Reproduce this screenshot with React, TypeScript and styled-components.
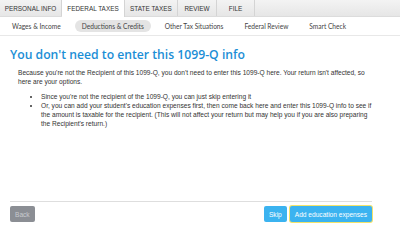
import { FC } from "react";
import styled, { createGlobalStyle } from "styled-components";

const GlobalStyle = createGlobalStyle`
  html, body {
    margin: 0;
    padding: 0;
    background: #fff;
  }
  body {
    width: 400px;
    height: 228px;
    overflow: hidden;
  }
`;

const topTabs = [
  { label: "PERSONAL INFO", width: 62 },
  { label: "FEDERAL TAXES", width: 63, active: true },
  { label: "STATE TAXES", width: 53 },
  { label: "REVIEW", width: 39 },
  { label: "FILE", width: 38 },
];

const subTabs = [
  { label: "Wages & Income" },
  { label: "Deductions & Credits", active: true },
  { label: "Other Tax Situations" },
  { label: "Federal Review" },
  { label: "Smart Check" },
];

const App: FC = () => (
  <Page>
    <GlobalStyle />
    <TopBar>
      {topTabs.map((t) => (
        <TopTab key={t.label} $active={t.active} style={{ width: t.width }}>
          {t.label}
        </TopTab>
      ))}
    </TopBar>

    <SubBar>
      {subTabs.map((t) => (
        <SubTab key={t.label} $active={t.active}>
          {t.label}
        </SubTab>
      ))}
    </SubBar>

    <Content>
      <Title>You don't need to enter this 1099-Q info</Title>
      <Body>
        <Para>
          Because you're not the Recipient of this 1099-Q, you don't need to enter this 1099-Q
          here. Your return isn't affected, so here are your options.
        </Para>
        <List>
          <li>Since you're not the recipient of the 1099-Q, you can just skip entering it</li>
          <li>
            Or, you can add your student's education expenses first, then come back here and
            enter this 1099-Q info to see if the amount is taxable for the recipient. (This will
            not affect your return but may help you if you are also preparing the Recipient's
            return.)
          </li>
        </List>
      </Body>
    </Content>

    <Footer>
      <GrayButton>Back</GrayButton>
      <Actions>
        <BlueButton>Skip</BlueButton>
        <BlueButton $focused>Add education expenses</BlueButton>
      </Actions>
    </Footer>
  </Page>
);

export default App;

const Page = styled.div`
  width: 400px;
  height: 228px;
  display: flex;
  flex-direction: column;
  font-family: "Liberation Sans", Arial, sans-serif;
`;

const TopBar = styled.div`
  display: flex;
  height: 17px;
  background: linear-gradient(#f3f3f3, #e6e6e6);
  border-bottom: 1px solid #dcdcdc;
  box-sizing: border-box;
`;

const TopTab = styled.div<{ $active?: boolean }>`
  display: flex;
  align-items: center;
  justify-content: center;
  box-sizing: border-box;
  height: ${(p) => (p.$active ? "17px" : "16px")};
  font-size: 6.4px;
  color: #333;
  background: ${(p) => (p.$active ? "#fff" : "transparent")};
  border-right: 1px solid #d4d4d4;
  white-space: nowrap;
`;

const SubBar = styled.div`
  display: flex;
  align-items: center;
  height: 18px;
  padding-left: 5px;
  gap: 7px;
  border-bottom: 1px solid #e8e8e8;
`;

const SubTab = styled.div<{ $active?: boolean }>`
  font-family: Lato, "Noto Sans", sans-serif;
  font-size: 6.6px;
  color: #444;
  padding: 2px 7px;
  border-radius: 8px;
  background: ${(p) => (p.$active ? "#e4e4e4" : "transparent")};
  white-space: nowrap;
`;

const Content = styled.div`
  flex: 1;
  padding: 11px 10px 0 10px;
`;

const Title = styled.h1`
  margin: 0;
  font-family: "Open Sans", "Noto Sans", sans-serif;
  font-weight: 600;
  font-size: 12.2px;
  line-height: 16px;
  color: #1b8ed6;
`;

const Body = styled.div`
  padding: 6px 0 0 8px;
  font-size: 6.6px;
  line-height: 8.7px;
  color: #333;
  width: 356px;
`;

const Para = styled.p`
  margin: 0;
`;

const List = styled.ul`
  margin: 7px 0 0 0;
  padding-left: 23px;
  list-style: disc;
`;

const Footer = styled.div`
  margin: 0 28px 6px 10px;
  border-top: 1px solid #dedede;
  padding-top: 4px;
  display: flex;
  align-items: center;
  justify-content: space-between;
`;

const Actions = styled.div`
  display: flex;
  gap: 3px;
`;

const Button = styled.button`
  font-family: "Liberation Sans", Arial, sans-serif;
  font-size: 6.6px;
  height: 16px;
  padding: 0 5px;
  border: none;
  border-radius: 2px;
  color: #fff;
  cursor: pointer;
`;

const GrayButton = styled(Button)`
  background: #8b8e94;
  color: #c9cbcf;
`;

const BlueButton = styled(Button)<{ $focused?: boolean }>`
  background: #3bb3f0;
  box-shadow: ${(p) => (p.$focused ? "0 0 0 1px #f3e36a" : "none")};
`;
